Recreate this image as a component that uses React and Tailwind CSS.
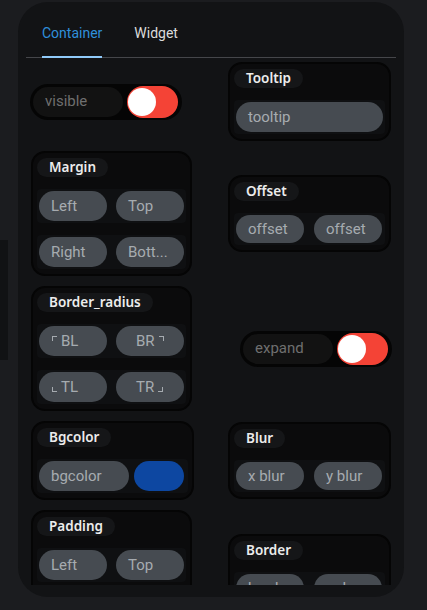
import React from 'react';

const Card = ({ title, width, children }) => (
  <div className={`flex flex-col items-start rounded-[14px] border-2 border-[#050505] bg-[#0b0b0c] px-1 pt-[5px] pb-[5px] ${width}`}>
    <div className="flex h-[19px] items-center rounded-full bg-[#151618] px-3 font-['Noto_Sans',sans-serif] text-[13.5px] leading-none font-semibold text-[#ececec]">
      {title}
    </div>
    <div className="mt-3 flex w-full flex-col gap-3">{children}</div>
  </div>
);

const Row = ({ children, gap = 'gap-[9px]' }) => (
  <div className={`flex items-center rounded-[4px] bg-[#0f1012] p-[2px] ${gap}`}>{children}</div>
);

const Field = ({ children, w = 'w-[68px]', h = 'h-[30px]', pad = 'pl-3' }) => (
  <div className={`flex items-center rounded-full bg-[#464b51] text-[15px] leading-none text-[#a6abb0] ${w} ${h} ${pad}`}>
    {children}
  </div>
);

const Toggle = ({ label, className = '' }) => (
  <div className={`flex h-[36px] w-[152px] items-center rounded-full bg-[#050505] pl-[3px] ${className}`}>
    <div className="flex h-[30px] w-[90px] items-center rounded-full bg-[#121212] pl-3 text-[15px] leading-none text-[#6f6f6f]">
      {label}
    </div>
    <div className="ml-[4px] flex h-[32px] w-[51px] items-center rounded-full bg-[#f44336] pl-px">
      <div className="h-[28px] w-[28px] rounded-full bg-white" />
    </div>
  </div>
);

// small corner marks for the radius fields
const corner = {
  tl: 'border-t-[1.5px] border-l-[1.5px] mb-[5px]',
  tr: 'border-t-[1.5px] border-r-[1.5px] mb-[5px]',
  bl: 'border-b-[1.5px] border-l-[1.5px] mt-[5px]',
  br: 'border-b-[1.5px] border-r-[1.5px] mt-[5px]',
};

const Mark = ({ kind }) => <span className={`block h-[5px] w-[5px] border-[#a6abb0] ${corner[kind]}`} />;

export default function App() {
  return (
    <div className="flex h-[610px] w-[427px] overflow-hidden bg-[#1b1c1f] font-['Roboto',sans-serif]">
      <div className="mt-[240px] h-[120px] w-[8px] shrink-0 bg-[#111214]" />

      <div className="ml-[10px] mt-[2px] flex h-[595px] w-[386px] shrink-0 flex-col rounded-[30px] bg-[#121315] px-2">
        {/* Tabs */}
        <div className="flex h-[56px] shrink-0 border-b border-[#45464a]">
          <div className="flex items-center px-4 pt-[8px]">
            <span className="relative flex h-full items-center text-[14px] text-[#2f8fdb]">
              Container
              <span className="absolute -bottom-px left-0 h-[2px] w-full bg-[#90caf9]" />
            </span>
          </div>
          <div className="flex items-center px-4 pt-[8px] text-[14px] text-[#dcdcdc]">Widget</div>
        </div>

        {/* Scroll area */}
        <div className="h-[527px] overflow-hidden">
          <div className="grid grid-cols-[170px_170px] items-center gap-x-[27px] gap-y-[10px] pl-[5px] pt-[4px]">
            <Toggle label="visible" className="-ml-px" />
            <Card title="Tooltip" width="w-[163px]">
              <Row>
                <Field w="w-[147px]">tooltip</Field>
              </Row>
            </Card>

            <Card title="Margin" width="w-[161px]">
              <Row>
                <Field>Left</Field>
                <Field>Top</Field>
              </Row>
              <Row>
                <Field>Right</Field>
                <Field>Bott...</Field>
              </Row>
            </Card>
            <Card title="Offset" width="w-[163px]">
              <Row gap="gap-[10px]">
                <Field h="h-[28px]" pad="pl-[12px]">offset</Field>
                <Field h="h-[28px]" pad="pl-[12px]">offset</Field>
              </Row>
            </Card>

            <Card title="Border_radius" width="w-[161px]">
              <Row>
                <Field pad="pl-[13px]">
                  <Mark kind="tl" />
                  <span className="ml-[4px]">BL</span>
                </Field>
                <Field pad="pl-[20px]">
                  <span>BR</span>
                  <span className="ml-[4px]"><Mark kind="tr" /></span>
                </Field>
              </Row>
              <Row>
                <Field pad="pl-[13px]">
                  <Mark kind="bl" />
                  <span className="ml-[4px]">TL</span>
                </Field>
                <Field pad="pl-[20px]">
                  <span>TR</span>
                  <span className="ml-[4px]"><Mark kind="br" /></span>
                </Field>
              </Row>
            </Card>
            <Toggle label="expand" className="ml-[12px]" />

            <Card title="Bgcolor" width="w-[163px]">
              <Row gap="gap-[5px]">
                <Field w="w-[90px]">bgcolor</Field>
                <div className="h-[30px] w-[50px] rounded-full bg-[#0d47a1]" />
              </Row>
            </Card>
            <Card title="Blur" width="w-[163px]">
              <Row gap="gap-[10px]">
                <Field h="h-[28px]">x blur</Field>
                <Field h="h-[28px]">y blur</Field>
              </Row>
            </Card>

            <Card title="Padding" width="w-[161px]">
              <Row>
                <Field>Left</Field>
                <Field>Top</Field>
              </Row>
              <Row>
                <Field>Right</Field>
                <Field>Bottom</Field>
              </Row>
            </Card>
            <Card title="Border" width="w-[163px]">
              <Row gap="gap-[10px]">
                <Field h="h-[28px]">border</Field>
                <Field h="h-[28px]">color</Field>
              </Row>
            </Card>
          </div>
        </div>
      </div>
    </div>
  );
}
